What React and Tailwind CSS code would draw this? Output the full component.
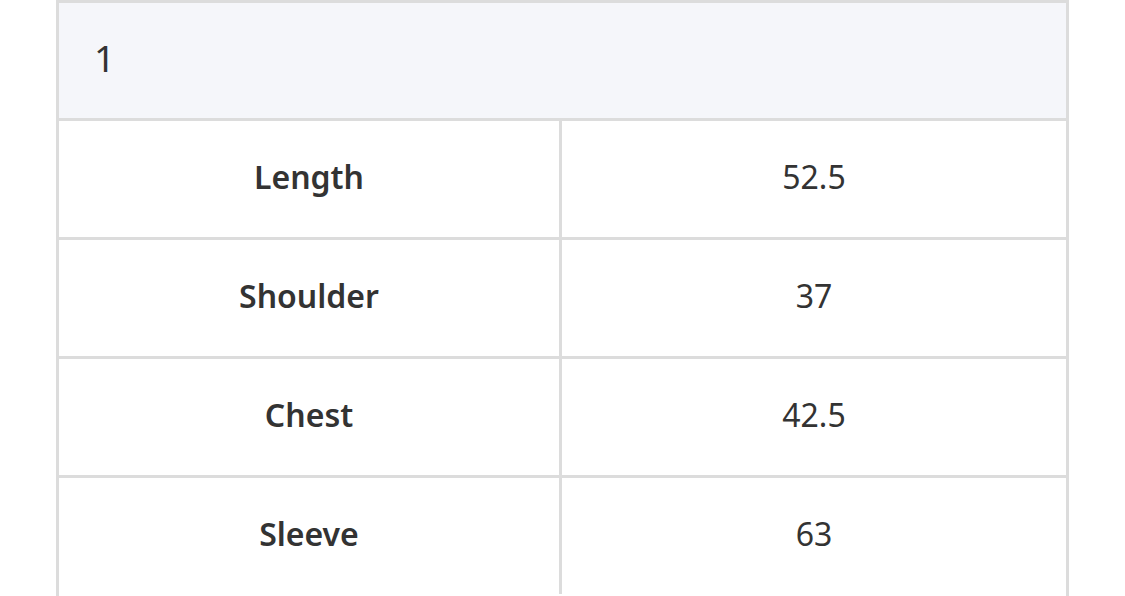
export default function App() {
  const rows = [
    ["Length", "52.5"],
    ["Shoulder", "37"],
    ["Chest", "42.5"],
    ["Sleeve", "63"],
  ];
  return (
    <div className="w-[1125px] h-[596px] overflow-hidden bg-white" style={{ fontFamily: '"Noto Sans", "Noto Sans CJK KR", sans-serif' }}>
      <div className="ml-[56px] w-[1013px] h-[620px] border-[3px] border-b-0 border-[#dcdcdc] text-[#333333]">
        <div className="h-[115px] bg-[#f5f6fa] flex items-center pl-[35px] pb-[6px] text-[37px]">1</div>
        {rows.map(([k, v]) => (
          <div key={k} className="flex h-[119px] border-t-[3px] border-[#dcdcdc]">
            <div className="w-[503px] border-r-[3px] border-[#dcdcdc] flex items-center justify-center pb-[4px] text-[32px] font-semibold">
              {k}
            </div>
            <div className="flex-1 flex items-center justify-center pb-[4px] text-[32px]">{v}</div>
          </div>
        ))}
      </div>
    </div>
  );
}
